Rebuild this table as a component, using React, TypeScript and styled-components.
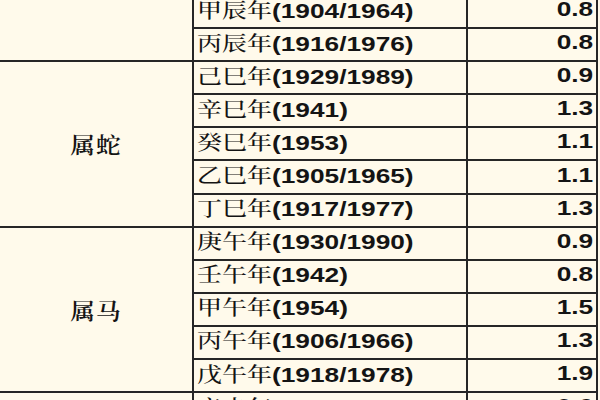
import React from "react";
import styled, { createGlobalStyle } from "styled-components";

type Row = { gz: string; yr: string; v: string };
type Group = { name: string; rows: Row[] };

// the first and last groups are cut by the frame: their labels lie outside it
const groups: Group[] = [
  {
    name: "",
    rows: [
      { gz: "甲辰年", yr: "(1904/1964)", v: "0.8" },
      { gz: "丙辰年", yr: "(1916/1976)", v: "0.8" },
    ],
  },
  {
    name: "属蛇",
    rows: [
      { gz: "己巳年", yr: "(1929/1989)", v: "0.9" },
      { gz: "辛巳年", yr: "(1941)", v: "1.3" },
      { gz: "癸巳年", yr: "(1953)", v: "1.1" },
      { gz: "乙巳年", yr: "(1905/1965)", v: "1.1" },
      { gz: "丁巳年", yr: "(1917/1977)", v: "1.3" },
    ],
  },
  {
    name: "属马",
    rows: [
      { gz: "庚午年", yr: "(1930/1990)", v: "0.9" },
      { gz: "壬午年", yr: "(1942)", v: "0.8" },
      { gz: "甲午年", yr: "(1954)", v: "1.5" },
      { gz: "丙午年", yr: "(1906/1966)", v: "1.3" },
      { gz: "戊午年", yr: "(1918/1978)", v: "1.9" },
    ],
  },
  {
    name: "",
    rows: [{ gz: "辛未年", yr: "(1931/1991)", v: "0.6" }],
  },
];

const GlobalStyle = createGlobalStyle`
  html, body {
    margin: 0;
    padding: 0;
    height: 400px;
    overflow: hidden;
    background: #fffaeb;
  }
`;

const Table = styled.div`
  display: flex;
  flex-direction: column;
  margin-top: -4px;
  width: 598px;
  background: #fffaeb;
  color: #141414;
`;

const GroupGrid = styled.div<{ $rows: number }>`
  display: grid;
  grid-template-columns: 194px 274px 130px;
  grid-template-rows: repeat(${(p) => p.$rows}, 33.1px);
`;

const Cell = styled.div`
  box-sizing: border-box;
  border-right: 2px solid #262626;
  border-bottom: 2px solid #262626;
  display: flex;
  align-items: center;
  overflow: hidden;
  white-space: nowrap;
`;

const LabelCell = styled(Cell)`
  grid-row: 1 / -1;
  grid-column: 1;
  justify-content: center;
`;

const YearCell = styled(Cell)`
  padding: 0 0 5px 3px;
`;

const ValueCell = styled(Cell)`
  justify-content: flex-end;
  padding: 0 3px 5px 0;
`;

const Stretch = styled.span<{ $origin: "left" | "right" }>`
  display: inline-block;
  transform: scaleX(1.25);
  transform-origin: ${(p) => p.$origin};
`;

const LabelText = styled.span`
  display: inline-block;
  font-family: "Noto Serif CJK SC", "Noto Sans CJK SC", serif;
  font-size: 22px;
  font-weight: 600;
  transform: scaleX(1.12);
  letter-spacing: 1px;
`;

const Gz = styled.span`
  font-family: "Noto Serif CJK SC", "Noto Sans CJK SC", serif;
  font-size: 20px;
  font-weight: 500;
`;

const Num = styled.span`
  font-family: "Liberation Sans", Arial, sans-serif;
  font-size: 21px;
  font-weight: 700;
`;

export default function App() {
  return (
    <>
      <GlobalStyle />
      <Table>
        {groups.map((g, i) => (
          <GroupGrid key={i} $rows={g.rows.length}>
            <LabelCell>
              <LabelText>{g.name}</LabelText>
            </LabelCell>
            {g.rows.map((r) => (
              <React.Fragment key={r.gz}>
                <YearCell>
                  <Stretch $origin="left">
                    <Gz>{r.gz}</Gz>
                    <Num>{r.yr}</Num>
                  </Stretch>
                </YearCell>
                <ValueCell>
                  <Stretch $origin="right">
                    <Num>{r.v}</Num>
                  </Stretch>
                </ValueCell>
              </React.Fragment>
            ))}
          </GroupGrid>
        ))}
      </Table>
    </>
  );
}
